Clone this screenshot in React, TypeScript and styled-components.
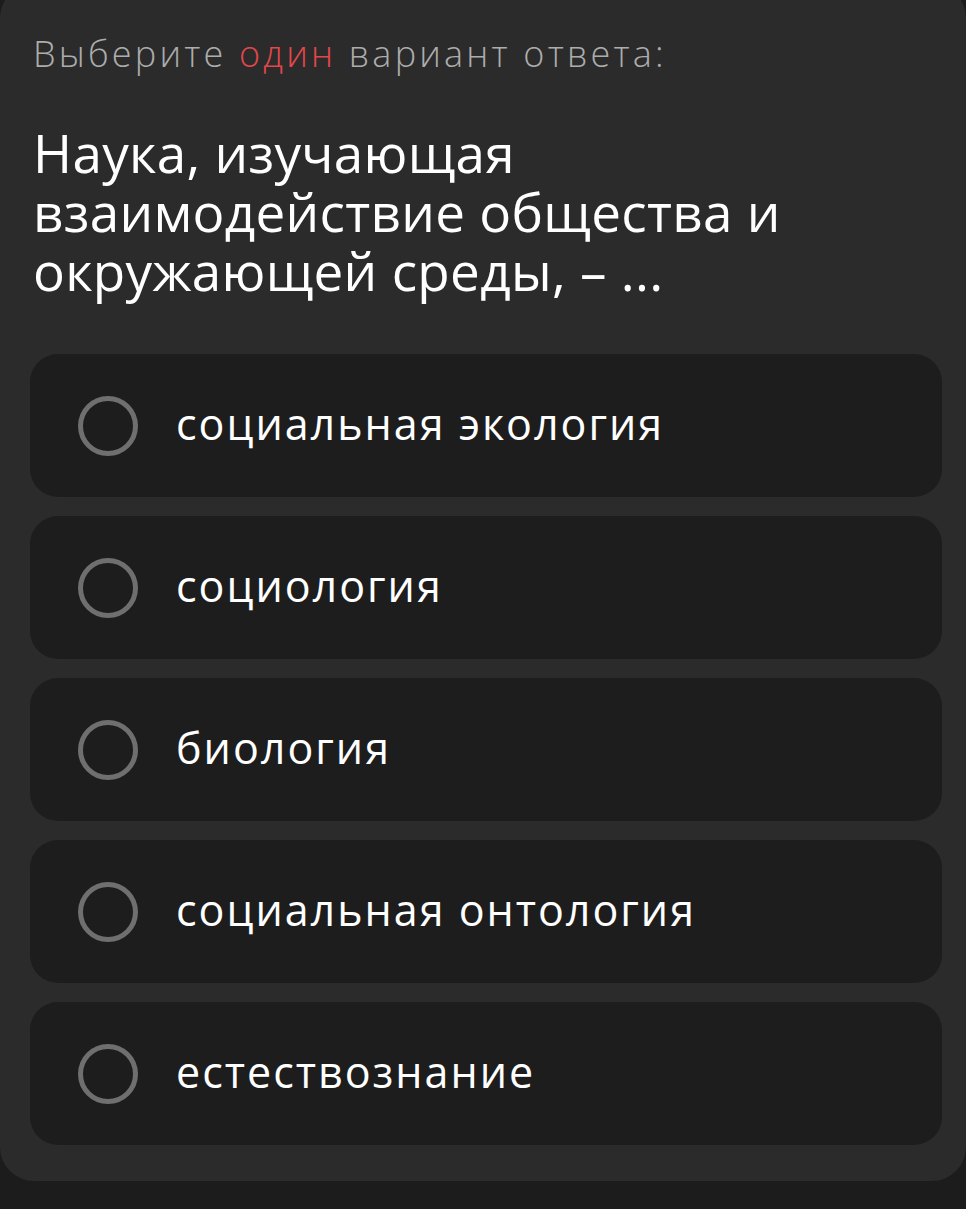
import React, { FunctionComponent } from 'react'
import styled, { createGlobalStyle } from 'styled-components'

const GlobalStyle = createGlobalStyle`
  html, body {
    margin: 0;
    padding: 0;
    background-color: #1c1c1c;
  }
  body {
    font-family: 'Open Sans', 'Noto Sans', sans-serif;
  }
`

const Page = styled.div`
  width: 966px;
  min-height: 1209px;
  overflow: hidden;
  background-color: #1c1c1c;
`

const Card = styled.section`
  margin-top: -16px;
  padding: 48px 24px 36px 30px;
  background-color: #2b2b2b;
  border-radius: 34px;
`

const Hint = styled.p`
  margin: 0 0 0 3px;
  font-family: 'Open Sans', sans-serif;
  font-weight: 300;
  font-size: 36px;
  line-height: 44px;
  letter-spacing: 3.2px;
  color: #adadad;
`

const Accent = styled.span`
  color: #e2474b;
`

const Question = styled.h1`
  margin: 47px 0 0 3px;
  max-width: 880px;
  font-family: 'Open Sans', sans-serif;
  font-weight: 400;
  font-size: 53px;
  line-height: 59px;
  letter-spacing: 0.3px;
  color: #ffffff;
`

const Options = styled.ul`
  list-style: none;
  margin: 54px 0 0;
  padding: 0;
  display: flex;
  flex-direction: column;
  gap: 19px;
`

const Option = styled.li`
  height: 143px;
  box-sizing: border-box;
  padding: 0 0 0 48px;
  display: flex;
  align-items: center;
  gap: 38px;
  background-color: #1d1d1d;
  border-radius: 28px;
`

const Radio = styled.span`
  flex: none;
  width: 60px;
  height: 60px;
  box-sizing: border-box;
  border: 5px solid #6f6f6f;
  border-radius: 50%;
`

const Label = styled.span`
  font-family: 'Open Sans', sans-serif;
  font-weight: 400;
  font-size: 43px;
  letter-spacing: 2px;
  color: #ffffff;
  margin-top: -5px;
`

const answers = ['социальная экология', 'социология', 'биология', 'социальная онтология', 'естествознание']

const App: FunctionComponent = () => (
  <Page>
    <GlobalStyle />
    <Card>
      <Hint>
        Выберите <Accent>один</Accent> вариант ответа:
      </Hint>
      <Question>Наука, изучающая взаимодействие общества и окружающей среды, – ...</Question>
      <Options>
        {answers.map(answer => (
          <Option key={answer}>
            <Radio />
            <Label>{answer}</Label>
          </Option>
        ))}
      </Options>
    </Card>
  </Page>
)

export default App
